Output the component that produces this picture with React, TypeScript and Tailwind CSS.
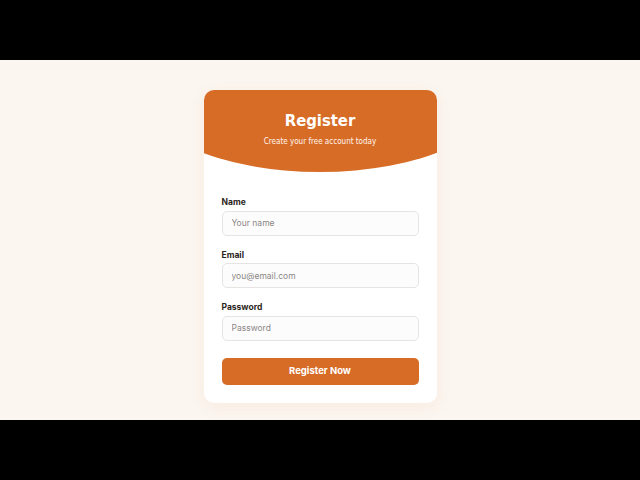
import React from "react";

export default function App() {
  const fields = [
    { label: "Name", ph: "Your name", type: "text" },
    { label: "Email", ph: "you@email.com", type: "email" },
    { label: "Password", ph: "Password", type: "password" },
  ];
  return (
    <div className="flex h-[480px] w-[640px] flex-col bg-black">
      <div className="h-[60px]" />
      <div className="flex h-[360px] justify-center bg-[#fbf6f0] pt-[30px]">
        <div className="h-[313px] w-[233px] overflow-hidden rounded-[10px] bg-white shadow-[0_4px_16px_rgba(214,110,40,0.08)]">
          <div className="flex h-[82px] flex-col items-center bg-[#d76c27] pt-[20px] [clip-path:ellipse(78%_100%_at_50%_0%)]">
            <div className="text-[16.5px] font-bold leading-[22px] text-white [font-family:'DejaVu_Sans_Condensed','DejaVu_Sans',sans-serif]">
              Register
            </div>
            <div className="mt-[4px] text-[8px] leading-[12px] text-[#fff6ef] [font-family:'DejaVu_Sans_Condensed','DejaVu_Sans',sans-serif]">
              Create your free account today
            </div>
          </div>
          <form className="flex flex-col px-[18px] pt-[24px] [font-family:Inter,sans-serif]">
            {fields.map((f, i) => (
              <div key={f.label} className={i > 0 ? "mt-[13px]" : ""}>
                <div className="h-[12px] text-[8.5px] font-bold leading-[12px] text-[#2a2420]">
                  {f.label}
                </div>
                <input
                  type={f.type}
                  placeholder={f.ph}
                  className="mt-[2px] box-border h-[25px] w-full rounded-[5px] border border-[#e6e3e0] bg-[#fdfcfc] px-[9px] text-[8.5px] text-[#333] outline-none placeholder:text-[#8a8785]"
                />
              </div>
            ))}
            <button
              type="button"
              className="mt-[17px] h-[27px] w-full rounded-[5px] bg-[#d76c27] text-[9.5px] font-bold text-white"
            >
              Register Now
            </button>
          </form>
        </div>
      </div>
    </div>
  );
}
